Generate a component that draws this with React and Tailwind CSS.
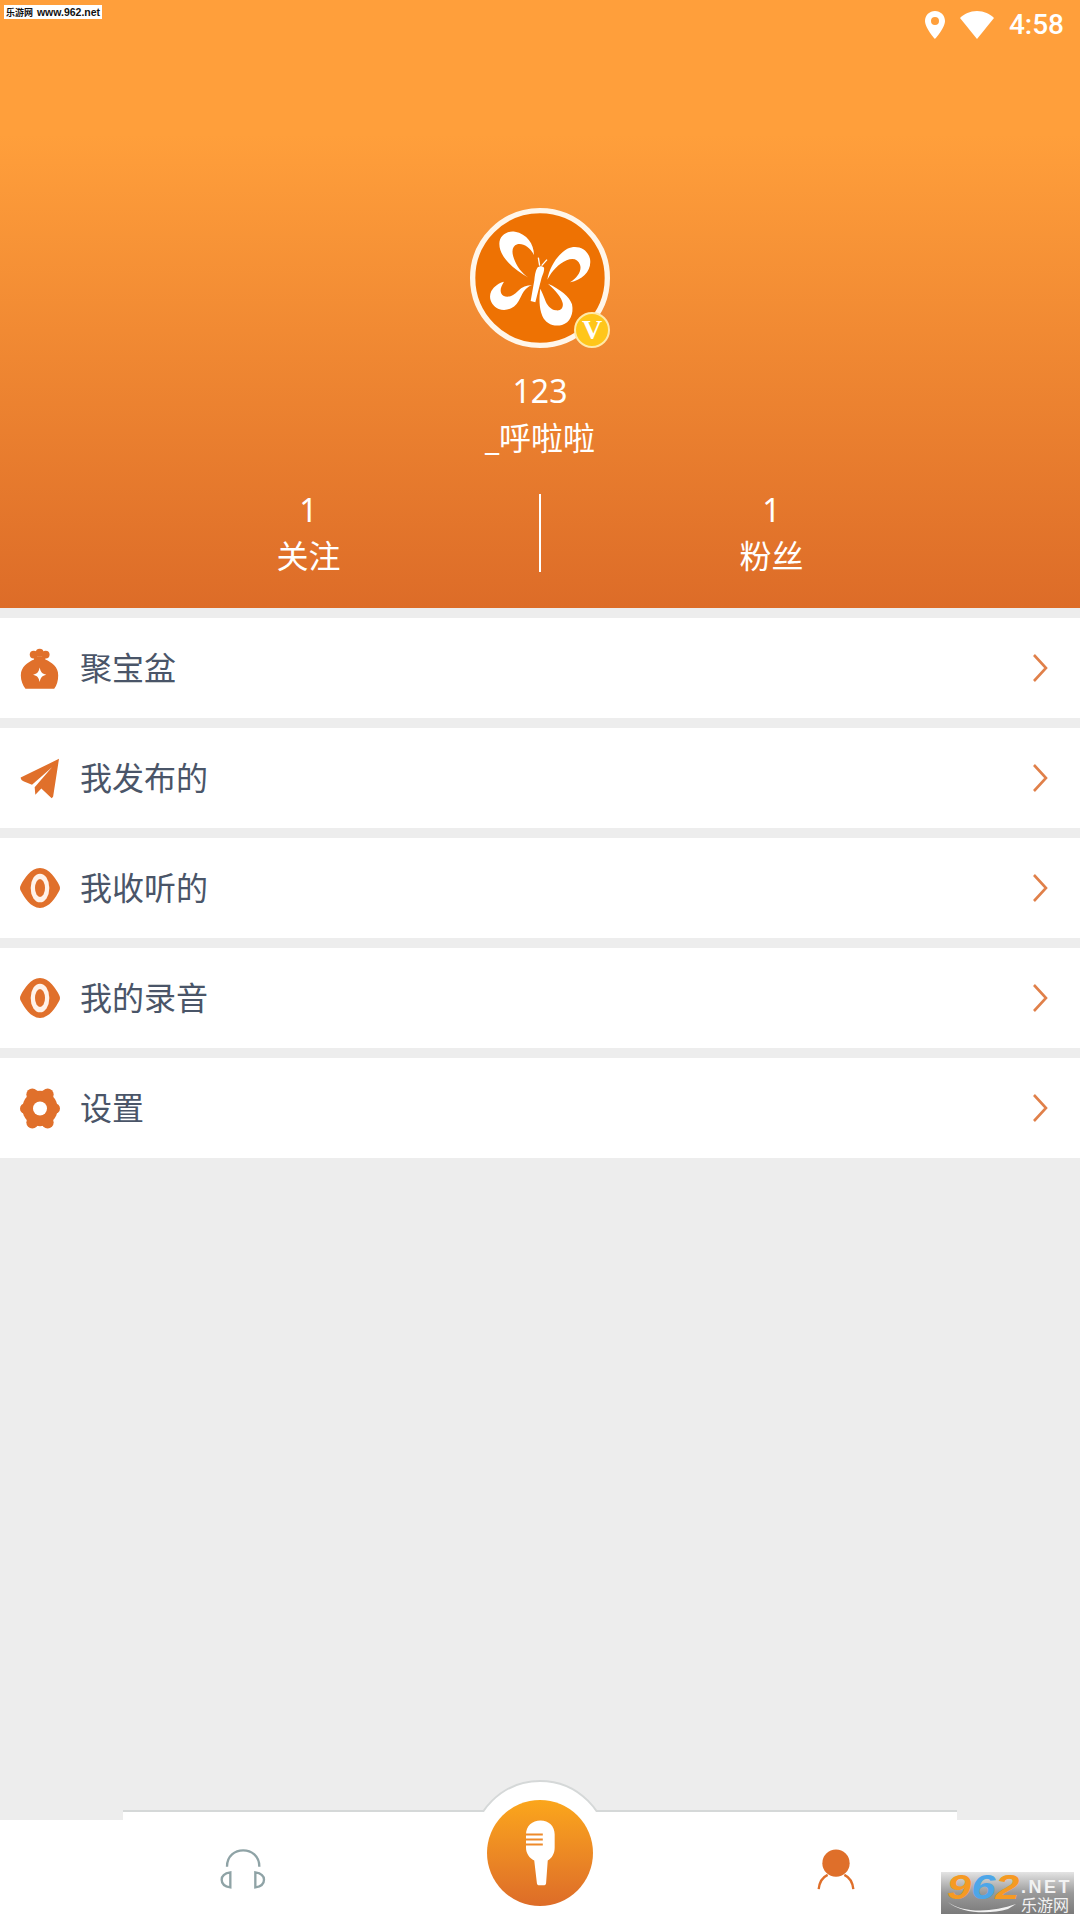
const cjk = "font-['Noto_Sans','Noto_Sans_CJK_SC',sans-serif]";

function Butterfly() {
  return (
    <svg viewBox="150 83 420 420" className="w-[140px] h-[140px]">
      <circle cx="360" cy="293" r="202" fill="#EE7203" stroke="#FFF6EA" strokeWidth="16" />
      <g fill="#fff">
        <path d="M326 292C285 270 238 232 238 190C238 165 262 150 285 154C320 160 342 190 342 224C328 198 308 188 292 192C276 197 274 214 282 235C290 258 306 278 326 292Z" />
        <path d="M382 298C388 262 412 222 442 205C470 192 502 204 510 235C516 270 490 298 450 306C474 290 486 270 480 253C474 236 458 232 440 240C416 250 396 272 382 298Z" />
        <path d="M336 315C312 322 306 345 296 362C284 385 258 394 236 386C214 376 204 352 214 332C222 318 236 308 252 304C240 322 238 338 250 346C264 354 280 346 294 332C306 320 320 315 336 315Z" />
        <path d="M361 325C357 350 357 382 367 407C377 430 400 440 426 434C450 428 462 400 456 372C450 350 420 326 384 310C408 332 424 350 428 368C431 383 422 392 408 390C392 388 380 374 374 355C370 344 365 334 361 325Z" />
        <path d="M352 262C358 256 368 256 372 262C374 270 368 284 364 295L346 366L332 362L343 300C344 288 346 272 352 262Z" />
      </g>
      <path d="M359 256L355 232M365 256L381 238" stroke="#fff" strokeWidth="4" fill="none" />
    </svg>
  );
}

function BagIcon() {
  return (
    <svg viewBox="60 111 120 124" className="w-10 h-[41px]">
      <circle cx="101" cy="131" r="12" fill="#E0702B" />
      <circle cx="119" cy="125" r="12" fill="#E0702B" />
      <circle cx="137" cy="131" r="12" fill="#E0702B" />
      <path d="M102 136H136V146C155 154 176 168 175 194C175 210 171 224 163 234H76C68 224 62 210 62 194C62 168 83 154 102 146Z" fill="#E0702B" />
      <path d="M119 170C122 184 126 189 139 192C126 195 122 200 119 214C116 200 112 195 99 192C112 189 116 184 119 170Z" fill="#fff" />
    </svg>
  );
}

function PlaneIcon() {
  return (
    <svg viewBox="60 445 120 122" className="w-10 h-[41px]">
      <path d="M177 447L62 503C62 509 66 512 72 515L96 525L156 472L104 532L106 555L124 536L155 565C158 562 160 560 160 556Z" fill="#E0702B" />
    </svg>
  );
}

function EyeIcon() {
  return (
    <svg viewBox="60 83 120 120" className="w-10 h-10">
      <path d="M120 83C148 83 168 116 177 133C181 140 181 146 177 153C168 170 148 203 120 203C92 203 72 170 63 153C59 146 59 140 63 133C72 116 92 83 120 83Z" fill="#E0702B" />
      <ellipse cx="120" cy="143" rx="28" ry="43" fill="#FFF3EA" />
      <ellipse cx="120" cy="143" rx="15" ry="27" fill="#E0702B" />
    </svg>
  );
}

function GearIcon() {
  return (
    <svg viewBox="60 743 120 122" className="w-10 h-[41px]" fill="#E0702B">
      <circle cx="120" cy="804" r="53" />
      <circle cx="164" cy="804" r="16" />
      <circle cx="76" cy="804" r="16" />
      <circle cx="143" cy="762" r="18" />
      <circle cx="97" cy="762" r="18" />
      <circle cx="143" cy="846" r="18" />
      <circle cx="97" cy="846" r="18" />
      <circle cx="120" cy="804" r="21" fill="#fff" />
    </svg>
  );
}

function Chevron() {
  return (
    <svg viewBox="0 0 16 30" className="w-4 h-[30px]">
      <path d="M2 2L14 15L2 28" fill="none" stroke="#E0804A" strokeWidth="2.6" />
    </svg>
  );
}

function MenuRow({ icon, label }) {
  return (
    <div className="h-[100px] bg-white flex items-center pl-5 pr-8 mb-[10px]">
      <div className="w-10 flex justify-center">{icon}</div>
      <span className={`ml-5 flex-1 text-[32px] leading-none text-[#4A5568] ${cjk}`}>{label}</span>
      <Chevron />
    </div>
  );
}

function Stat({ value, label }) {
  return (
    <div className="flex-1 flex flex-col items-center">
      <span className="text-[32px] leading-[46px]">{value}</span>
      <span className="text-[32px] leading-[46px]">{label}</span>
    </div>
  );
}

export default function App() {
  return (
    <div className={`relative w-[1080px] h-[1920px] bg-[#EDEDED] flex flex-col overflow-hidden ${cjk}`}>
      <div className="absolute left-[4px] top-[5px] w-[98px] h-[14px] bg-white flex items-center justify-center gap-[4px] leading-none font-bold text-[#111] whitespace-nowrap">
        <span className="text-[9px]">乐游网</span>
        <span className="text-[10.5px] font-['Liberation_Sans',sans-serif]">www.962.net</span>
      </div>

      <header className="h-[608px] shrink-0 bg-gradient-to-b from-[#FF9F3B] from-[22%] to-[#DD6C28] text-white flex flex-col">
        <div className="h-[50px] flex items-center justify-end pr-4 gap-[15px]">
          <svg viewBox="0 0 20 28" className="w-5 h-7">
            <path fillRule="evenodd" d="M10 0C4.5 0 0 4.3 0 10C0 17 10 28 10 28C10 28 20 17 20 10C20 4.3 15.5 0 10 0ZM10 6A4 4 0 1 1 10 14A4 4 0 1 1 10 6Z" fill="#fff" />
          </svg>
          <svg viewBox="0 0 34 28" className="w-[34px] h-7">
            <path d="M17 28L0 7C4 3 10 0 17 0C24 0 30 3 34 7Z" fill="#fff" />
          </svg>
          <span className="text-[28px] leading-none font-medium font-['Roboto',sans-serif]">4:58</span>
        </div>
        <div className="mt-[158px] flex justify-center">
          <div className="relative w-[140px] h-[140px]">
            <Butterfly />
            <div className="absolute left-[104px] top-[104px] w-9 h-9 rounded-full bg-[#FFC61A] border-2 border-[#FFE9A8] flex items-center justify-center text-white text-[28px] leading-none font-bold font-['Liberation_Serif',serif]">
              V
            </div>
          </div>
        </div>
        <div className="mt-[19px] flex flex-col items-center text-[32px] leading-[47px]">
          <span>123</span>
          <span>_呼啦啦</span>
        </div>
        <div className="mt-[26px] px-[78px] flex items-center">
          <Stat value="1" label="关注" />
          <div className="w-[2px] h-[78px] bg-white" />
          <Stat value="1" label="粉丝" />
        </div>
      </header>

      <main className="mt-[10px] flex-1">
        <MenuRow icon={<BagIcon />} label="聚宝盆" />
        <MenuRow icon={<PlaneIcon />} label="我发布的" />
        <MenuRow icon={<EyeIcon />} label="我收听的" />
        <MenuRow icon={<EyeIcon />} label="我的录音" />
        <MenuRow icon={<GearIcon />} label="设置" />
      </main>

      <nav className="relative h-[110px] shrink-0">
        <div className="mx-[123px] h-[10px] bg-white border-t-2 border-[#D5D8D8]" />
        <div className="h-[100px] bg-white flex items-center justify-between pl-[220px] pr-[224px] pb-[2px]">
          <svg viewBox="360 270 138 120" className="w-[46px] h-10">
            <path d="M381 323C381 258 478 258 478 323" fill="none" stroke="#8FA3A6" strokeWidth="7" />
            <path d="M391 340V385C372 382 365 372 365 362C365 352 372 343 391 340ZM466 340V385C485 382 492 372 492 362C492 352 485 343 466 340Z" fill="none" stroke="#8FA3A6" strokeWidth="7" />
          </svg>
          <svg viewBox="708 265 120 128" className="w-10 h-[43px]">
            <circle cx="768" cy="310" r="41" fill="#DF6F2A" />
            <path d="M716 388C718 368 728 352 743 345M793 345C808 352 818 368 820 388" fill="none" stroke="#DF6F2A" strokeWidth="7" />
          </svg>
        </div>

        {/* bump behind the record button */}
        <div className="absolute left-[471px] top-[-30px] w-[138px] h-[32px] overflow-hidden">
          <div className="w-[138px] h-[138px] rounded-full bg-white border-2 border-[#D5D8D8]" />
        </div>
        <div className="absolute left-[487px] top-[-10px] w-[106px] h-[106px] rounded-full bg-gradient-to-b from-[#FBA61B] to-[#DD6C28] flex items-center justify-center">
          <svg viewBox="1275 188 88 198" className="w-[29px] h-[66px]">
            <path d="M1319 188C1344 188 1362 205 1362 230V270C1362 288 1354 302 1341 310L1336 378C1336 383 1333 385 1328 385H1316C1311 385 1308 383 1308 378L1300 310C1285 302 1275 288 1275 270V230C1275 205 1294 188 1319 188Z" fill="#fff" />
            <path d="M1275 231H1326M1275 246H1326M1275 261H1326" stroke="#EE8A2A" strokeWidth="6" />
          </svg>
        </div>
      </nav>

      {/* site watermark */}
      <div className="absolute left-[941px] top-[1872px] w-[133px] h-[42px] bg-gradient-to-b from-[#E4E4E4] via-[#9A9A9A] to-[#7A7A7A]">
        <div className="flex items-start h-[25px] pl-[6px] font-['Liberation_Sans',sans-serif] font-bold leading-none whitespace-nowrap">
          <span className="w-[74px] origin-left scale-x-[1.24] text-[35px] leading-[29px] italic text-[#F59A23]">
            9<span className="text-[#4DA6E8]">6</span>2
          </span>
          <span className="mt-[6px] text-[18px] text-[#F2F2F2] tracking-[2.5px]">.NET</span>
        </div>
        <div className="pr-[5px] text-right text-[16px] leading-[17px] text-[#F2F2F2]">乐游网</div>
        <svg viewBox="0 0 70 12" className="absolute left-[7px] top-[29px] w-[70px] h-3">
          <path d="M0 1C14 12 44 12 68 3L60 8C40 14 12 12 0 1Z" fill="#F2F2F2" />
        </svg>
      </div>
    </div>
  );
}
